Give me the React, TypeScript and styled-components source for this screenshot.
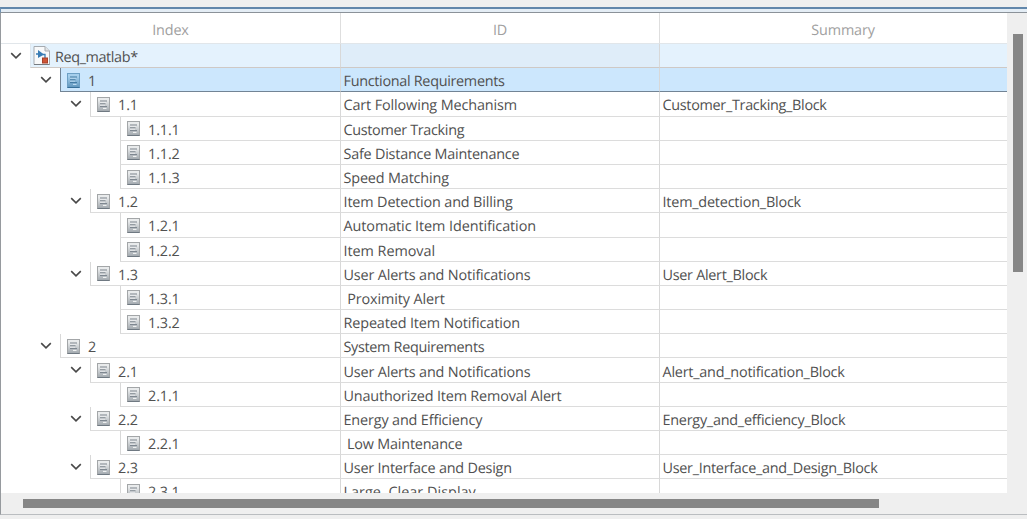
import React from "react";
import styled, { createGlobalStyle } from "styled-components";

const Global = createGlobalStyle`
  *, *::before, *::after { box-sizing: border-box; }
  body { margin: 0; background: #eff0f1; overflow: hidden; }
`;

const Frame = styled.div`
  width: 1027px;
  height: 519px;
  padding-top: 7px;
  background: #efefef;
  font-family: "Open Sans", "Noto Sans", sans-serif;
  font-size: 14.4px;
  color: #505050;
  text-rendering: geometricPrecision;
`;

const AccentBar = styled.div`
  height: 6px;
  border-top: 2px solid #6287ab;
  border-bottom: 1px solid #8b9299;
  border-left: 1px solid #6f93b5;
  background: #e4edf5;
`;

const Panel = styled.div`
  display: grid;
  grid-template-columns: 1006px 1fr;
  grid-template-rows: 479.5px 1fr;
  height: 502px;
  border-left: 1px solid #969a9e;
  border-bottom: 1px solid #babdc0;
  background: #efefef;
`;

const Sheet = styled.div`
  overflow: hidden;
  background: #fff;
`;

const columns = "339px 319px 1fr";

const HeaderRow = styled.div`
  display: grid;
  grid-template-columns: ${columns};
  height: 31px;
`;

const HeaderCell = styled.div<{ $indent?: number }>`
  display: flex;
  align-items: center;
  justify-content: center;
  padding-top: 4px;
  padding-left: ${(p) => p.$indent ?? 0}px;
  letter-spacing: -0.15px;
  color: #a0a0a0;
  border-bottom: 1px solid #e1e6ea;
  & + & { border-left: 1px solid #dedede; }
`;

type Tone = "root" | "selected" | "plain";

const lineColor: Record<Tone, string> = {
  root: "#cfc9c5",
  selected: "#728495",
  plain: "#dcdcdc",
};
const fill: Record<Tone, string> = {
  root: "#e4f2fd",
  selected: "#cce7fd",
  plain: "#fff",
};

const TreeRow = styled.div`
  display: grid;
  grid-template-columns: ${columns};
  height: 24.19px;
`;

const IndexCell = styled.div<{ $depth: number }>`
  display: flex;
  padding-left: ${(p) => 6 + p.$depth * 30}px;
`;

const Toggle = styled.div`
  width: 23px;
  flex: none;
  padding: 6px 0 0 2.5px;
  svg { display: block; }
`;

const IndexBox = styled.div<{ $tone: Tone }>`
  flex: 1;
  display: flex;
  align-items: center;
  background: ${(p) => fill[p.$tone]};
  border-bottom: 1px solid ${(p) => lineColor[p.$tone]};
  border-left: 1px solid ${(p) => (p.$tone === "root" ? "#e0e8ef" : p.$tone === "selected" ? "#728495" : "#d8d8d8")};
`;

const IconSlot = styled.span<{ $root: boolean }>`
  display: flex;
  width: ${(p) => (p.$root ? 24 : 27)}px;
  padding-top: ${(p) => (p.$root ? 0 : 1)}px;
  padding-left: ${(p) => (p.$root ? 2 : 5.5)}px;
  flex: none;
`;

const Label = styled.span<{ $track?: number }>`
  white-space: pre;
  line-height: 19px;
  letter-spacing: ${(p) => p.$track ?? 0}px;
  padding-top: 4px;
`;

const Cell = styled.div<{ $tone: Tone; $shade?: boolean }>`
  display: flex;
  align-items: center;
  padding-left: 2.5px;
  background: ${(p) => (p.$shade ? "#dfedf9" : fill[p.$tone])};
  border-left: 1px solid #d8d8d8;
  border-bottom: 1px solid ${(p) => lineColor[p.$tone]};
`;

const VerticalTrack = styled.div`
  padding: 21px 0 0 6px;
`;
const VerticalThumb = styled.div`
  width: 9.5px;
  height: 238px;
  background: #868686;
`;
const HorizontalTrack = styled.div`
  grid-column: 1 / -1;
  padding: 6px 0 0 21.5px;
`;
const HorizontalThumb = styled.div`
  width: 856.5px;
  height: 9.5px;
  background: #868686;
`;

const Chevron = () => (
  <svg width="12" height="12" viewBox="0 0 12 12" fill="none" stroke="#484848" strokeWidth="1.6">
    <path d="M1.2 3.2 6 7.8l4.8-4.6" />
  </svg>
);

const RequirementIcon = ({ blue }: { blue: boolean }) => {
  const c = blue
    ? { edge: "#6da0c5", top: "#a6cfec", low: "#5f96bd", ink: "#376f99", light: "#c5e1f5" }
    : { edge: "#a3a6a8", top: "#e9ebec", low: "#a0a7ad", ink: "#6f7982", light: "#f5f6f7" };
  const id = blue ? "noteBlue" : "noteGray";
  return (
    <svg width="13" height="15" viewBox="0 0 13 15">
      <defs>
        <linearGradient id={id} x1="0" y1="0" x2="0" y2="1">
          <stop offset="0.2" stopColor={c.top} />
          <stop offset="1" stopColor={c.low} />
        </linearGradient>
      </defs>
      <rect x="0.5" y="0.5" width="12" height="14" fill={`url(#${id})`} stroke={c.edge} />
      <path d="M0.5 14.5H12.5" stroke={c.ink} />
      <path d="M3 5H9M3 8H8M6 11.4H9.5" stroke={c.light} />
      <path d="M3 4H10M3 6.8H8.5M3 9.6H10" stroke={c.ink} strokeWidth="0.9" />
    </svg>
  );
};

const RequirementSetIcon = () => (
  <svg width="18" height="21" viewBox="0 0 18 21">
    <path d="M1 1.5H12L16.5 6V19.5H1Z" fill="#f8f9fa" stroke="#a6abb0" />
    <path d="M12 1.5V6H16.5" fill="#e1e4e7" stroke="#a6abb0" />
    <path d="M1 19.5H16.5" stroke="#777c81" />
    <path d="M5 5 11 9.5 5 13Z" fill="#387cb5" />
    <path d="M3 9H6M9.5 9.5H12V14" fill="none" stroke="#387cb5" strokeWidth="1.3" />
    <rect x="9.5" y="13" width="5" height="5" fill="#cf5536" stroke="#a74029" />
  </svg>
);

interface Item {
  depth: number;
  index: string;
  id?: string;
  idTrack?: number;
  summary?: string;
  summaryTrack?: number;
  open?: boolean;
  tone?: Tone;
}

const items: Item[] = [
  { depth: 0, index: "Req_matlab*", open: true, tone: "root" },
  { depth: 1, index: "1", id: "Functional Requirements", idTrack: -0.3, open: true, tone: "selected" },
  { depth: 2, index: "1.1", id: "Cart Following Mechanism", idTrack: -0.12, summary: "Customer_Tracking_Block", summaryTrack: -0.3, open: true },
  { depth: 3, index: "1.1.1", id: "Customer Tracking", idTrack: -0.32 },
  { depth: 3, index: "1.1.2", id: "Safe Distance Maintenance", idTrack: -0.22 },
  { depth: 3, index: "1.1.3", id: "Speed Matching", idTrack: -0.15 },
  { depth: 2, index: "1.2", id: "Item Detection and Billing", idTrack: -0.14, summary: "Item_detection_Block", summaryTrack: -0.2, open: true },
  { depth: 3, index: "1.2.1", id: "Automatic Item Identification", idTrack: -0.08 },
  { depth: 3, index: "1.2.2", id: "Item Removal", idTrack: -0.04 },
  { depth: 2, index: "1.3", id: "User Alerts and Notifications", idTrack: -0.16, summary: "User Alert_Block", summaryTrack: -0.28, open: true },
  { depth: 3, index: "1.3.1", id: " Proximity Alert", idTrack: -0.1 },
  { depth: 3, index: "1.3.2", id: "Repeated Item Notification", idTrack: -0.13 },
  { depth: 1, index: "2", id: "System Requirements", idTrack: -0.31, open: true },
  { depth: 2, index: "2.1", id: "User Alerts and Notifications", idTrack: -0.16, summary: "Alert_and_notification_Block", summaryTrack: -0.22, open: true },
  { depth: 3, index: "2.1.1", id: "Unauthorized Item Removal Alert", idTrack: -0.17 },
  { depth: 2, index: "2.2", id: "Energy and Efficiency", idTrack: -0.14, summary: "Energy_and_efficiency_Block", summaryTrack: -0.24, open: true },
  { depth: 3, index: "2.2.1", id: " Low Maintenance", idTrack: -0.2 },
  { depth: 2, index: "2.3", id: "User Interface and Design", idTrack: -0.21, summary: "User_Interface_and_Design_Block", summaryTrack: -0.28, open: true },
  { depth: 3, index: "2.3.1", id: "Large, Clear Display", idTrack: 0.03 },
];

export default function App() {
  return (
    <>
      <Global />
      <Frame>
        <AccentBar />
        <Panel>
          <Sheet>
            <HeaderRow>
              <HeaderCell>Index</HeaderCell>
              <HeaderCell>ID</HeaderCell>
              <HeaderCell $indent={19}>Summary</HeaderCell>
            </HeaderRow>
            {items.map((item) => {
              const tone = item.tone ?? "plain";
              return (
                <TreeRow key={item.index}>
                  <IndexCell $depth={item.depth}>
                    <Toggle>{item.open && <Chevron />}</Toggle>
                    <IndexBox $tone={tone}>
                      <IconSlot $root={tone === "root"}>
                        {tone === "root" ? <RequirementSetIcon /> : <RequirementIcon blue={tone === "selected"} />}
                      </IconSlot>
                      <Label $track={tone === "root" ? -0.38 : -0.1}>{item.index}</Label>
                    </IndexBox>
                  </IndexCell>
                  <Cell $tone={tone} $shade={tone === "root"}>
                    <Label $track={item.idTrack}>{item.id}</Label>
                  </Cell>
                  <Cell $tone={tone}>
                    <Label $track={item.summaryTrack}>{item.summary}</Label>
                  </Cell>
                </TreeRow>
              );
            })}
          </Sheet>
          <VerticalTrack>
            <VerticalThumb />
          </VerticalTrack>
          <HorizontalTrack>
            <HorizontalThumb />
          </HorizontalTrack>
        </Panel>
      </Frame>
    </>
  );
}
